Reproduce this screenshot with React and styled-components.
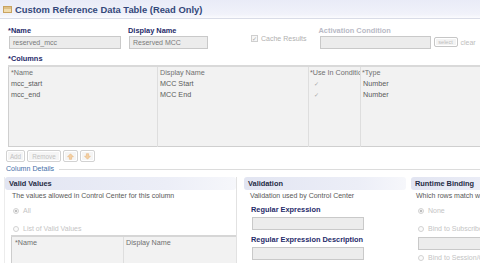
import React from "react";
import styled, { createGlobalStyle } from "styled-components";

const GlobalStyle = createGlobalStyle`
  * { box-sizing: border-box; }
  html, body { margin: 0; padding: 0; background: #fff; }
  body {
    width: 480px;
    height: 263px;
    overflow: hidden;
    font-family: "Liberation Sans", Arial, sans-serif;
  }
`;

const columns = [
  { name: "mcc_start", display: "MCC Start", cond: true, type: "Number" },
  { name: "mcc_end", display: "MCC End", cond: true, type: "Number" },
];

export default function App() {
  return (
    <Page>
      <GlobalStyle />
      <TitleBar>
        <svg width="9" height="7" viewBox="0 0 9 7">
          <rect x="0.5" y="0.5" width="8" height="6" fill="#f1dcae" stroke="#c9a360" />
          <line x1="0.5" y1="2" x2="8.5" y2="2" stroke="#c9a360" />
        </svg>
        <Title>Custom Reference Data Table (Read Only)</Title>
      </TitleBar>

      <Form>
        <FieldRow>
          <Field $w={113}>
            <Label>*Name</Label>
            <TextBox $w={112}>reserved_mcc</TextBox>
          </Field>
          <Field $w={80} $ml={7}>
            <Label>Display Name</Label>
            <TextBox $w={79}>Reserved MCC</TextBox>
          </Field>
          <CheckField>
            <CheckBox>✓</CheckBox>
            <span>Cache Results</span>
          </CheckField>
          <Field $w={160} $ml={12}>
            <Label $disabled>Activation Condition</Label>
            <InputRow>
              <TextBox $w={111} />
              <SmallButton>select</SmallButton>
              <ClearLink>clear</ClearLink>
            </InputRow>
          </Field>
        </FieldRow>

        <SectionLabel>*Columns</SectionLabel>
        <Grid>
          <colgroup>
            <col style={{ width: 149 }} />
            <col style={{ width: 151 }} />
            <col style={{ width: 52 }} />
            <col />
          </colgroup>
          <tbody>
            <HeadRow>
              <Cell>*Name</Cell>
              <Cell>Display Name</Cell>
              <Cell $tight>*Use In Condition</Cell>
              <Cell $tight>*Type</Cell>
            </HeadRow>
            {columns.map((c) => (
              <BodyRow key={c.name}>
                <Cell>{c.name}</Cell>
                <Cell>{c.display}</Cell>
                <Cell $check>{c.cond ? "✓" : ""}</Cell>
                <Cell>{c.type}</Cell>
              </BodyRow>
            ))}
            <FillRow>
              <Cell />
              <Cell />
              <Cell />
              <Cell />
            </FillRow>
          </tbody>
        </Grid>

        <ButtonBar>
          <ToolButton $w={19}>Add</ToolButton>
          <ToolButton $w={34}>Remove</ToolButton>
          <ToolButton $w={15}>
            <Arrow />
          </ToolButton>
          <ToolButton $w={15}>
            <Arrow $down />
          </ToolButton>
        </ButtonBar>
      </Form>

      <Legend>
        <span>Column Details</span>
        <Rule />
      </Legend>

      <Panels>
        <Panel $w={233} $bordered>
          <PanelHeader>Valid Values</PanelHeader>
          <Description $pl={7}>The values allowed in Control Center for this column</Description>
          <RadioRow $mt={6} $pl={8}>
            <Radio $checked />
            All
          </RadioRow>
          <RadioRow $mt={9} $pl={8}>
            <Radio />
            List of Valid Values
          </RadioRow>
          <InnerGrid>
            <colgroup>
              <col style={{ width: 112 }} />
              <col />
            </colgroup>
            <tbody>
              <HeadRow>
                <Cell $pl={3}>*Name</Cell>
                <Cell>Display Name</Cell>
              </HeadRow>
              <FillRow>
                <Cell />
                <Cell />
              </FillRow>
            </tbody>
          </InnerGrid>
        </Panel>

        <Panel $w={164} $ml={6}>
          <PanelHeader>Validation</PanelHeader>
          <Description $pl={6}>Validation used by Control Center</Description>
          <Stack>
            <Label $mt={5}>Regular Expression</Label>
            <TextBox $w={112} $mt={3} />
            <Label $mt={5}>Regular Expression Description</Label>
            <TextBox $w={112} $mt={3} />
          </Stack>
        </Panel>

        <Panel $w={120} $ml={3}>
          <PanelHeader>Runtime Binding</PanelHeader>
          <Description $pl={5}>Which rows match with subscriber data</Description>
          <RadioRow $mt={6} $pl={7}>
            <Radio $checked />
            None
          </RadioRow>
          <RadioRow $mt={9} $pl={7}>
            <Radio />
            Bind to Subscriber Field
          </RadioRow>
          <Stack $pl={6}>
            <TextBox $w={110} $mt={4} />
          </Stack>
          <RadioRow $mt={3} $pl={7}>
            <Radio />
            Bind to Session/Context Field
          </RadioRow>
        </Panel>
      </Panels>
    </Page>
  );
}

function Arrow({ $down }) {
  return (
    <svg width="7" height="7" viewBox="0 0 7 7">
      <g transform={$down ? "rotate(180 3.5 3.5)" : undefined}>
        <path d="M3.5 0.8 L6.4 3.8 H4.6 V6.3 H2.4 V3.8 H0.6 Z" fill="#f4d0a4" stroke="#e8b77e" strokeWidth="0.6" />
      </g>
    </svg>
  );
}

const Page = styled.div`
  width: 480px;
  height: 263px;
  overflow: hidden;
  color: #555;
`;

const TitleBar = styled.div`
  height: 19px;
  display: flex;
  align-items: center;
  gap: 3px;
  padding-left: 3px;
  background: linear-gradient(#e9ebf7, #f1f2fa 80%, #fbfbfe);
  border-bottom: 1px solid #d9dce7;
`;

const Title = styled.h1`
  margin: 0;
  font-size: 9.4px;
  font-weight: 700;
  color: #34487a;
  white-space: nowrap;
`;

const Form = styled.div`
  padding-left: 8px;
`;

const FieldRow = styled.div`
  display: flex;
  align-items: flex-start;
  margin-top: 7px;
`;

const Field = styled.div`
  display: flex;
  flex-direction: column;
  flex: none;
  width: ${(p) => p.$w}px;
  margin-left: ${(p) => p.$ml || 0}px;
`;

const Label = styled.div`
  height: 9px;
  line-height: 9px;
  margin-top: ${(p) => p.$mt || 0}px;
  font-size: 7.4px;
  font-weight: 700;
  white-space: nowrap;
  color: ${(p) => (p.$disabled ? "#b9bac6" : "#1f2b6a")};
`;

const TextBox = styled.div`
  width: ${(p) => p.$w}px;
  height: 13px;
  margin-top: ${(p) => (p.$mt === undefined ? 1 : p.$mt)}px;
  margin-left: 1px;
  padding: 0 3px;
  line-height: 11px;
  font-size: 7px;
  color: #7a7a7a;
  background: #ececec;
  border: 1px solid #c9c9c9;
  white-space: nowrap;
  flex: none;
`;

const CheckField = styled.div`
  display: flex;
  align-items: center;
  gap: 3px;
  flex: none;
  height: 9px;
  margin: 8px 0 0 43px;
  font-size: 7px;
  color: #b0b0b0;
  white-space: nowrap;
`;

const CheckBox = styled.span`
  width: 7px;
  height: 7px;
  border: 1px solid #cfcfcf;
  background: #f7f7f7;
  font-size: 6px;
  line-height: 5px;
  text-align: center;
  color: #a8a8a8;
  font-family: "DejaVu Sans", sans-serif;
`;

const InputRow = styled.div`
  display: flex;
  align-items: center;
`;

const SmallButton = styled.span`
  width: 24px;
  height: 10px;
  margin-left: 3px;
  border: 1px solid #c6c6c6;
  border-radius: 2px;
  background: #f3f3f3;
  box-shadow: inset 0 0 0 1px #fff;
  font-size: 5.5px;
  line-height: 8px;
  text-align: center;
  color: #bdbdbd;
`;

const ClearLink = styled.span`
  margin-left: 3px;
  font-size: 7px;
  color: #bdbdbd;
`;

const SectionLabel = styled(Label)`
  margin-top: 5px;
`;

const Grid = styled.table`
  width: 480px;
  height: 82px;
  margin-top: 2px;
  table-layout: fixed;
  border-collapse: collapse;
  background: #f2f2f2;
  border: 1px solid #cfcfcf;
  border-top: 2px solid #d9d9d9;
  font-size: 7.2px;
`;

const HeadRow = styled.tr`
  height: 12px;
  color: #707070;
`;

const BodyRow = styled.tr`
  height: 11.5px;
  color: #5a5a5a;
`;

const FillRow = styled.tr``;

const Cell = styled.td`
  padding: 0 0 0 ${(p) => (p.$pl !== undefined ? p.$pl : p.$check ? 5 : p.$tight ? 1 : 2)}px;
  border-right: 1px solid #dedede;
  white-space: nowrap;
  overflow: hidden;
  text-overflow: clip;
  vertical-align: middle;
  line-height: 10px;
  color: ${(p) => (p.$check ? "#a8a8a8" : "inherit")};
  font-family: ${(p) => (p.$check ? '"DejaVu Sans", sans-serif' : "inherit")};
  font-size: ${(p) => (p.$check ? "6px" : "inherit")};
`;

const ButtonBar = styled.div`
  display: flex;
  gap: 2px;
  margin: 3px 0 0 -2px;
`;

const ToolButton = styled.span`
  display: flex;
  align-items: center;
  justify-content: center;
  width: ${(p) => p.$w}px;
  height: 12px;
  border: 1px solid #d2d2d2;
  border-radius: 2px;
  background: #f5f5f5;
  box-shadow: inset 0 0 0 1px #fff;
  font-size: 6.3px;
  color: #c2c2c2;
`;

const Legend = styled.div`
  display: flex;
  align-items: center;
  height: 9px;
  margin-top: 2px;
  padding-left: 6px;
  font-size: 7.1px;
  color: #4670a8;
  white-space: nowrap;
`;

const Rule = styled.div`
  flex: 1;
  height: 1px;
  margin: 2px 0 0 5px;
  background: #dcdcdc;
`;

const Panels = styled.div`
  display: flex;
  align-items: stretch;
  height: 90px;
  margin-top: 4px;
  padding-left: 4px;
`;

const Panel = styled.section`
  flex: none;
  width: ${(p) => p.$w}px;
  margin-left: ${(p) => p.$ml || 0}px;
  border-left: 1px solid ${(p) => (p.$bordered ? "#ececec" : "transparent")};
  border-right: 1px solid ${(p) => (p.$bordered ? "#e2e2e2" : "transparent")};
  overflow: hidden;
`;

const PanelHeader = styled.h2`
  margin: 0;
  height: 13px;
  line-height: 13px;
  padding-left: 4px;
  border-radius: 3px;
  background: linear-gradient(to right, #e2e5f2, #eceef7 70%, #f6f7fb);
  font-size: 7.4px;
  font-weight: 700;
  color: #252b44;
  white-space: nowrap;
`;

const Description = styled.div`
  height: 9px;
  line-height: 9px;
  margin-top: 1px;
  padding-left: ${(p) => p.$pl}px;
  font-size: 7px;
  color: #585858;
  white-space: nowrap;
`;

const RadioRow = styled.div`
  display: flex;
  align-items: center;
  gap: 4px;
  height: 9px;
  margin-top: ${(p) => p.$mt}px;
  padding-left: ${(p) => p.$pl}px;
  font-size: 7px;
  color: #c4c4c4;
  white-space: nowrap;
`;

const Radio = styled.span`
  flex: none;
  width: 6px;
  height: 6px;
  border-radius: 50%;
  border: 1px solid #d2d2d2;
  background: ${(p) => (p.$checked ? "radial-gradient(circle, #bdbdbd 0 1.3px, #f8f8f8 1.6px)" : "#fbfbfb")};
`;

const InnerGrid = styled.table`
  width: 226px;
  height: 40px;
  margin: 2px 0 0 6px;
  table-layout: fixed;
  border-collapse: collapse;
  background: #f2f2f2;
  border: 1px solid #cdcdcd;
  border-top: 2px solid #d6d6d6;
  font-size: 7.2px;
`;

const Stack = styled.div`
  display: flex;
  flex-direction: column;
  padding-left: ${(p) => (p.$pl !== undefined ? p.$pl : 7)}px;
`;
